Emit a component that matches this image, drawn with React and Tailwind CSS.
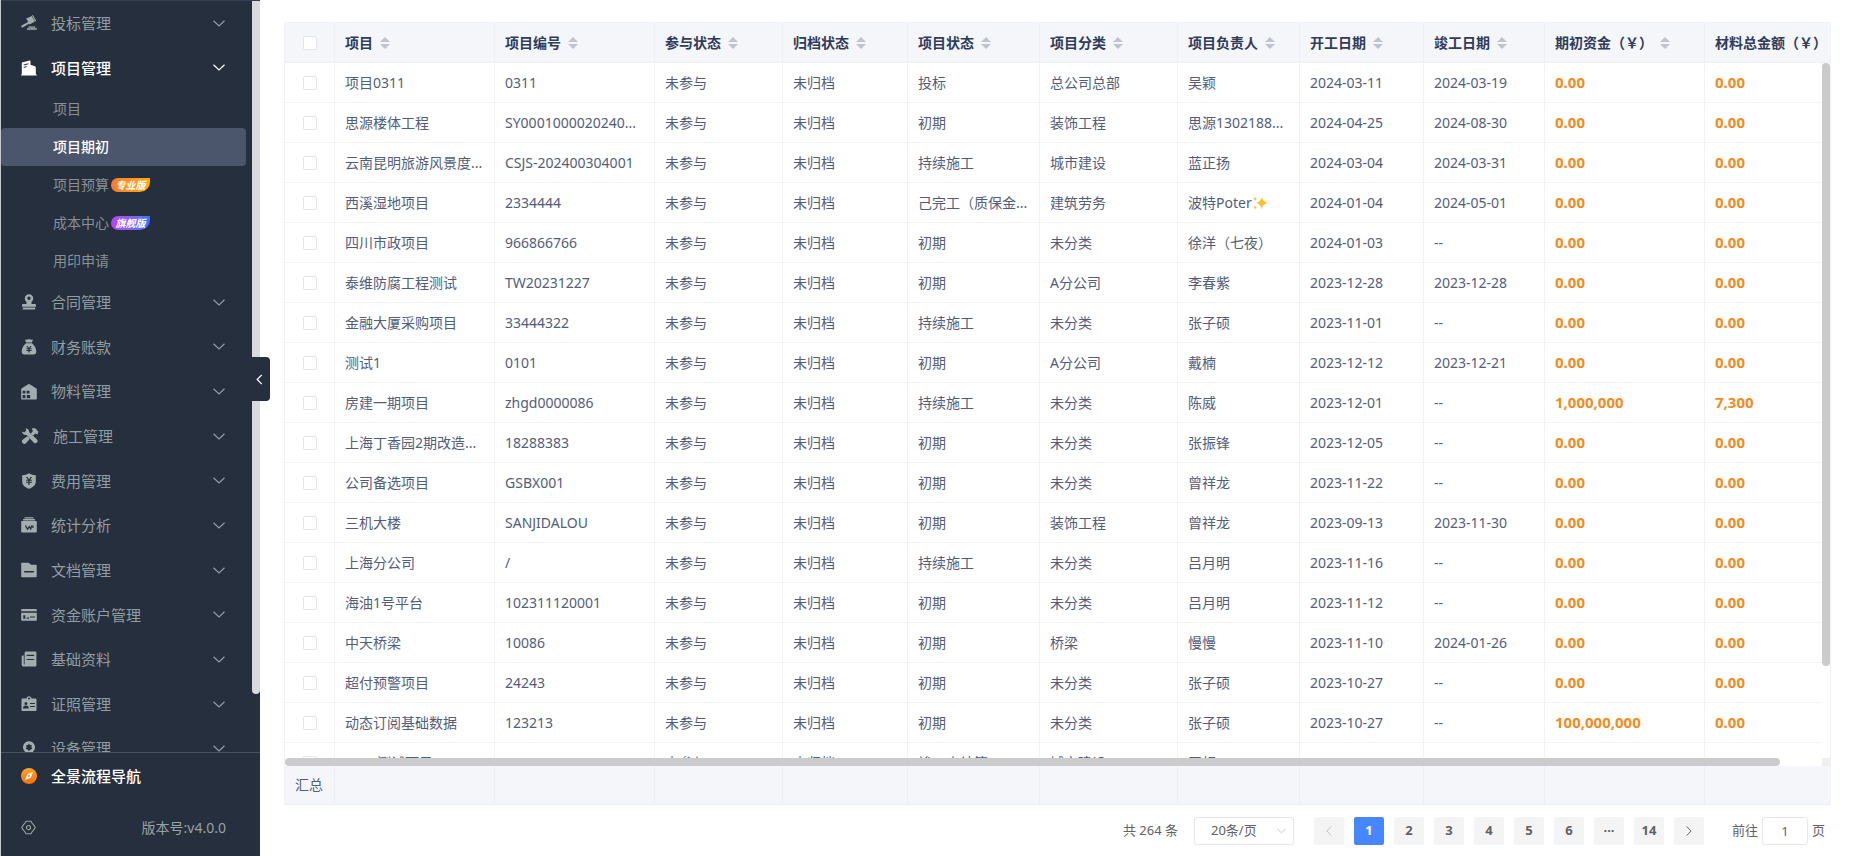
import React, { useState } from 'react';
import clsx from 'clsx';

const ICONS = {
  gavel: (
    <>
      <path d="M0.6 10.6 8 6.6l.9 1.6-7.3 4.2a1 1 0 0 1-1.3-.5z" />
      <path d="m6.2 3.2 4.4-2.3 3.3 5.6-4.4 2.4zM5.2 3.5l.9-.5 3.6 6-.9.6zM11 .6l.9-.5 3.3 5.7-.9.6z" />
      <path d="M7.4 11.4h6.8v1.3H7.4zM6 13.3h9.8v1.5H6z" />
    </>
  ),
  building: (
    <path
      fillRule="evenodd"
      d="M1 2.6 8.6.4c.5-.1.9.2.9.7v3.6l4.4 1.6c.6.2.9.6.9 1.1v7h1v1H.2v-1h.6V3c0-.2 0-.3.2-.4zm1.7 1.9v1l4.8-1.3v-1zm0 2.4v1l3-.8v-1z"
    />
  ),
  stamp: (
    <path
      fillRule="evenodd"
      d="M8 .2a4.2 4.2 0 0 1 4.2 4.2c0 1.500-.8 2.600-1.700 3.400v2.200h3.100c.8 0 1.400.5 1.400 1.300v1.400H1v-1.400C1 10.500 1.600 10 2.400 10h3.100V7.800C4.600 7 3.800 5.900 3.800 4.400A4.200 4.200 0 0 1 8 .2zm0 2.400a1.700 1.700 0 1 0 0 3.400 1.700 1.700 0 0 0 0-3.400zM1.800 13.600h12.400v1.800H1.800z"
    />
  ),
  bag: (
    <path
      fillRule="evenodd"
      d="M3.900.4c1.300.5 2 .2 2.700.1.9-.2 1.900-.2 2.800 0 .7.1 1.400.4 2.700-.1L10.800 3.400H5.200zM5 4.300h6c2.500 1.900 4.300 5.200 4.300 8.300 0 1.800-.9 2.900-2.700 2.900H3.400C1.600 15.500.7 14.400.7 12.600.7 9.500 2.500 6.200 5 4.300zm.3 2.600L7 9.300H5.400v.9h2v.8h-2v.9h2v1.600h1.200v-1.600h2V11h-2v-.8h2v-.9H9l1.700-2.400H9.400L8 9 6.600 6.900z"
    />
  ),
  warehouse: (
    <path
      fillRule="evenodd"
      d="M7.300.3a1.300 1.300 0 0 1 1.300 0l6.500 4c.4.2.7.6.7 1.100v9c0 .6-.4 1-1 1H1.200c-.6 0-1-.4-1-1V5.400c0-.5.2-.9.600-1.100zM1.600 6.800v2.800h2.800V6.800zm4 0v2.800h2.900V6.800zm-4 4.200v3.200h2.800V11zm4.200 0v3.200h3.400V11z"
    />
  ),
  tools: (
    <>
      <path
        d="M4.200 1c1.900.1 3.300 1.700 3.100 3.700l7 6.300a2.100 2.100 0 0 1-2.900 3l-6.400-7C3 7.300 1 6 .8 3.900l2.100 1 1.600-1.500z"
      />
      <path d="M9.600 1.200h3.100l2.800 3-.9 2.400-1.800-.8-2.100 2-2-2 1.800-2z" />
      <path d="m5.600 8.200 2.300 2.200-3.300 3.800a2.100 2.100 0 1 1-2.900-3z" />
    </>
  ),
  shield: (
    <path
      fillRule="evenodd"
      d="M8 .2c1.800 1.200 4.200 1.900 6.800 2v6.300c0 3.500-2.700 5.900-6.800 7.300C3.900 14.400 1.200 12 1.200 8.500V2.200C3.800 2.100 6.200 1.400 8 .2zM5 3.900l1.800 2.800H5.100v1h2.200v1H5.100v1h2.200v2h1.400v-2h2.200v-1H8.700v-1h2.200v-1H9.200L11 3.900H9.500L8 6.400 6.500 3.900z"
    />
  ),
  stats: (
    <>
      <path d="M3.500.2h9v1.200h-9zM2.100 2.100h11.800v1.300H2.100z" />
      <path d="M1.200 4.100h13.600c.6 0 1 .4 1 1v9.400c0 .6-.4 1-1 1H1.200c-.6 0-1-.4-1-1V5.100c0-.6.4-1 1-1z" />
      <path d="m4.400 8.600 2.200 3.600 1.600-2.800 1.500 2.600 1.200-3.600M11.900 8.600v2.400" fill="none" stroke="#262f3d" strokeWidth="1.200" />
    </>
  ),
  folder: (
    <path
      fillRule="evenodd"
      d="M1.200.7h6.500L10 2.800h4.700c.6 0 1 .4 1 1v10.500c0 .6-.4 1-1 1H1.200c-.6 0-1-.4-1-1V1.700c0-.6.4-1 1-1zM3.200 9v1.400h9.600V9z"
    />
  ),
  card: (
    <path
      fillRule="evenodd"
      d="M1 2h14c.5 0 .8.300.8.800v1.400H.2V2.800C.2 2.300.5 2 1 2zM.2 5.700h15.600v7.100c0 .6-.3.900-.8.900H1c-.5 0-.8-.3-.8-.9zM2.300 8.200v3.600h2V8.200zm3.300 2.400v1.200H8v-1.200zm3.300-1.200v1h5v-1z"
    />
  ),
  book: (
    <path
      fillRule="evenodd"
      d="M5.100.6h9.300c.6 0 1 .4 1 1v12.800c0 .7-.5 1.200-1.200 1.200H2.600C1.400 15.600.7 14.800.7 13.700V5.500c0-.5.4-.9.900-.9h1.200v8.900h.8V2.100c0-.8.6-1.500 1.500-1.500zm.6 3.200v1.100h7.500V3.800zm0 4.200v1.100h7.500V8z"
    />
  ),
  badge: (
    <path
      fillRule="evenodd"
      d="M8 .2c1.500 0 2.400.9 2.500 2.400h4.200c.5 0 .8.300.8.800v10.900c0 .5-.3.800-.8.800H1.300c-.5 0-.8-.3-.8-.8V3.400c0-.5.3-.8.800-.8h4.200C5.600 1.100 6.500.2 8 .2zM8 1.600a1 1 0 1 0 0 2 1 1 0 0 0 0-2zM4.900 5.900a1.500 1.500 0 1 0 0 3 1.500 1.500 0 0 0 0-3zM2 12.500h5.800c0-1.700-1-2.900-2.900-2.900S2 10.800 2 12.500zM9 6.900V8h4.900V6.900zm0 3V11h4.900V9.900z"
    />
  ),
  device: (
    <path
      fillRule="evenodd"
      d="M8 .2a6 6 0 0 1 4 10.400l2.800 4.900H1.200L4 10.600A6 6 0 0 1 8 .2zm0 2.400-1 1.500-1.900.2.5 1.900-.9 1.700 1.800.5L8 9.900l1.500-1.500 1.800-.5-.9-1.700.5-1.900L9 4.100z"
    />
  ),
};

const MENU_TOP = [
  { label: '投标管理', icon: 'gavel' },
  { label: '项目管理', icon: 'building', open: true },
];

const SUB_MENU = [
  { label: '项目' },
  { label: '项目期初' },
  { label: '项目预算', tag: '专业版', tagClass: 'bg-linear-to-r from-[#fb7a2b] to-[#ffae00]' },
  { label: '成本中心', tag: '旗舰版', tagClass: 'bg-linear-to-r from-[#bb3df5] to-[#2f74ff]' },
  { label: '用印申请' },
];

const MENU_REST = [
  { label: '合同管理', icon: 'stamp' },
  { label: '财务账款', icon: 'bag' },
  { label: '物料管理', icon: 'warehouse' },
  { label: '施工管理', icon: 'tools', wide: true },
  { label: '费用管理', icon: 'shield' },
  { label: '统计分析', icon: 'stats' },
  { label: '文档管理', icon: 'folder' },
  { label: '资金账户管理', icon: 'card' },
  { label: '基础资料', icon: 'book' },
  { label: '证照管理', icon: 'badge' },
  { label: '设备管理', icon: 'device' },
];

const COLUMNS = [
  { title: '项目', width: 'w-[160px]' },
  { title: '项目编号', width: 'w-[160px]' },
  { title: '参与状态', width: 'w-[128px]' },
  { title: '归档状态', width: 'w-[125px]' },
  { title: '项目状态', width: 'w-[132px]' },
  { title: '项目分类', width: 'w-[138px]' },
  { title: '项目负责人', width: 'w-[122px]' },
  { title: '开工日期', width: 'w-[124px]' },
  { title: '竣工日期', width: 'w-[121px]' },
  { title: '期初资金（￥）', width: 'w-[160px]' },
  { title: '材料总金额（￥）', width: '' },
];

// name, code, status, category, owner, start, end, initial fund, material total
const ROWS = [
  ['项目0311', '0311', '投标', '总公司总部', '吴颖', '2024-03-11', '2024-03-19', '0.00', '0.00'],
  ['思源楼体工程', 'SY0001000020240...', '初期', '装饰工程', '思源1302188...', '2024-04-25', '2024-08-30', '0.00', '0.00'],
  ['云南昆明旅游风景度...', 'CSJS-202400304001', '持续施工', '城市建设', '蓝正扬', '2024-03-04', '2024-03-31', '0.00', '0.00'],
  ['西溪湿地项目', '2334444', '己完工（质保金...', '建筑劳务', '波特Poter', '2024-01-04', '2024-05-01', '0.00', '0.00'],
  ['四川市政项目', '966866766', '初期', '未分类', '徐洋（七夜）', '2024-01-03', '--', '0.00', '0.00'],
  ['泰维防腐工程测试', 'TW20231227', '初期', 'A分公司', '李春紫', '2023-12-28', '2023-12-28', '0.00', '0.00'],
  ['金融大厦采购项目', '33444322', '持续施工', '未分类', '张子硕', '2023-11-01', '--', '0.00', '0.00'],
  ['测试1', '0101', '初期', 'A分公司', '戴楠', '2023-12-12', '2023-12-21', '0.00', '0.00'],
  ['房建一期项目', 'zhgd0000086', '持续施工', '未分类', '陈威', '2023-12-01', '--', '1,000,000', '7,300'],
  ['上海丁香园2期改造...', '18288383', '初期', '未分类', '张振锋', '2023-12-05', '--', '0.00', '0.00'],
  ['公司备选项目', 'GSBX001', '初期', '未分类', '曾祥龙', '2023-11-22', '--', '0.00', '0.00'],
  ['三机大楼', 'SANJIDALOU', '初期', '装饰工程', '曾祥龙', '2023-09-13', '2023-11-30', '0.00', '0.00'],
  ['上海分公司', '/', '持续施工', '未分类', '吕月明', '2023-11-16', '--', '0.00', '0.00'],
  ['海油1号平台', '102311120001', '初期', '未分类', '吕月明', '2023-11-12', '--', '0.00', '0.00'],
  ['中天桥梁', '10086', '初期', '桥梁', '慢慢', '2023-11-10', '2024-01-26', '0.00', '0.00'],
  ['超付预警项目', '24243', '初期', '未分类', '张子硕', '2023-10-27', '--', '0.00', '0.00'],
  ['动态订阅基础数据', '123213', '初期', '未分类', '张子硕', '2023-10-27', '--', '100,000,000', '0.00'],
  ['1211测试项目', '1211', '竣工未结算', '城市建设', '王相', '2023-10-11', '2023-11-17', '0.00', '0.00'],
];

function Chevron({ className }) {
  return (
    <svg viewBox="0 0 12 7" className={className} fill="none" stroke="currentColor" strokeWidth="1.2">
      <path d="m.5.7 5.500 5.300L11.500.7" />
    </svg>
  );
}

function Sparkles() {
  return (
    <svg viewBox="0 0 16 16" className="inline-block w-4 h-4 align-[-3px]" fill="#fcc02e" aria-label="✨">
      <path d="M9.800 1.700c.9 3.300 2 4.800 5.900 6.100-3.900 1.400-5 2.800-5.900 6.400-.9-3.600-2-5-5.700-6.400 3.700-1.300 4.800-2.800 5.700-6.100z" />
      <path d="M3.200 1.600c.3 1.400.7 1.900 2.100 2.300-1.400.4-1.800.9-2.100 2.300C2.900 4.800 2.500 4.300 1.100 3.900c1.400-.4 1.800-.9 2.100-2.300zM3 10.200c.3 1.400.7 1.900 2 2.300-1.300.4-1.700.9-2 2.300-.3-1.400-.7-1.900-2-2.300 1.300-.4 1.700-.9 2-2.300z" />
    </svg>
  );
}

function MenuItem({ item }) {
  return (
    <button
      className={clsx(
        'flex items-center w-full pl-5 pr-7 gap-[14px] text-[15px] text-left',
        item.open ? 'text-white font-medium' : 'text-[#939da1]'
      )}
    >
      <svg
        viewBox="0 0 16 16"
        className={clsx('shrink-0', item.wide ? 'w-[18px] h-[18px]' : 'w-4 h-4')}
        fill={item.open ? '#fff' : '#a3adb0'}
      >
        {ICONS[item.icon]}
      </svg>
      <span className="flex-1">{item.label}</span>
      <Chevron className="w-3 h-[7px]" />
    </button>
  );
}

function Sidebar() {
  const [active, setActive] = useState('项目期初');

  return (
    <aside className="relative w-[260px] shrink-0 h-full flex flex-col bg-[#262f3d] border-l border-[#c4c8cc]">
      <nav className="relative flex-1 min-h-0 overflow-hidden border-t border-[#344052]">
        <div className="w-[252px]">
          <div className="grid auto-rows-fr h-[89px]">
            {MENU_TOP.map((item) => <MenuItem key={item.label} item={item} />)}
          </div>
          {SUB_MENU.map((sub) => (
            <button
              key={sub.label}
              onClick={() => setActive(sub.label)}
              className={clsx(
                'flex items-center h-[38px] w-[245px] pl-[52px] gap-[2px] rounded text-sm',
                active === sub.label ? 'bg-[#4b556b] text-white font-medium' : 'text-[#879195]'
              )}
            >
              {sub.label}
              {sub.tag && (
                <span
                  className={clsx(
                    'h-[14px] w-[39px] leading-[14px] text-center text-[10px] font-bold italic text-white rounded-l-[7px] rounded-br-[10px]',
                    sub.tagClass
                  )}
                >
                  {sub.tag}
                </span>
              )}
            </button>
          ))}
          <div className="grid auto-rows-fr h-[491px]">
            {MENU_REST.map((item) => <MenuItem key={item.label} item={item} />)}
          </div>
        </div>
        {/* scrollbar thumb */}
        <div className="absolute right-0 top-0 w-2 h-[693px] bg-[#d8dadd] rounded-b" />
      </nav>

      <div className="h-[104px] border-t border-[#485162]">
        <button className="flex items-center h-[46px] pl-5 gap-[14px] text-[15px] font-medium text-white">
          <svg viewBox="0 0 16 16" className="w-4 h-4">
            <defs>
              <linearGradient id="nav" x1="0" y1="0" x2="0" y2="1">
                <stop offset="0" stopColor="#ffa32b" />
                <stop offset="1" stopColor="#fb6f0a" />
              </linearGradient>
            </defs>
            <circle cx="8" cy="8" r="8" fill="url(#nav)" />
            <path d="m12 4-2.300 5.700L4 12l2.300-5.700z" fill="#fff" />
            <circle cx="8" cy="8" r="1.100" fill="#fb8a1a" />
          </svg>
          全景流程导航
        </button>
        <div className="flex items-center justify-between h-[57px] pl-5 pr-[34px] text-sm text-[#98a2a5]">
          <svg viewBox="0 0 16 16" className="w-[15px] h-[15px]" fill="none" stroke="currentColor" strokeWidth="1.200">
            <path d="M5.300 1.300h5.400l1 1.900 1.900 2.300L15.200 8l-1.600 2.500-1.900 2.300-1 1.900H5.300l-1-1.900-1.900-2.300L.8 8l1.600-2.500 1.900-2.300z" strokeLinejoin="round" />
            <circle cx="8" cy="8" r="2.200" />
          </svg>
          <span>版本号:v4.0.0</span>
        </div>
      </div>

      <button
        aria-label="收起"
        className="absolute z-10 top-[357px] left-[251px] w-[18px] h-11 flex items-center pl-1 bg-[#262f3d] rounded-r text-white"
      >
        <svg viewBox="0 0 7 12" className="w-[7px] h-[11px]" fill="none" stroke="currentColor" strokeWidth="1.400">
          <path d="M6 1 1 6l5 5" />
        </svg>
      </button>
    </aside>
  );
}

function SortCaret() {
  return (
    <svg viewBox="0 0 10 12" className="w-[10px] h-3 shrink-0" fill="#c0c4cc">
      <path d="M5 0l5 5H0zM5 12l5-5H0z" />
    </svg>
  );
}

function Checkbox({ label }) {
  return (
    <input
      type="checkbox"
      aria-label={label}
      className="block mx-auto appearance-none w-[14px] h-[14px] bg-white border border-[#e2e5ec] rounded-[2px] checked:bg-[#4886ff]"
    />
  );
}

const td = 'border-r border-b border-[#f1f3f9] px-[10px] whitespace-nowrap';
const money = 'text-[15px] font-bold text-[#f58a23]';

function ProjectTable() {
  return (
    <div className="relative flex-1 min-h-0 border-t border-x border-[#f0f2f7]">
      <div className="h-full overflow-hidden">
        <table className="table-fixed w-full min-w-[1580px] border-separate border-spacing-0 text-sm text-[#525d7b]">
          <thead>
            <tr className="h-10">
              <th className="sticky top-0 z-10 w-[50px] bg-[#f5f6fa] border-r border-b border-[#edf0f6]">
                <Checkbox label="全选" />
              </th>
              {COLUMNS.map((col) => (
                <th
                  key={col.title}
                  className={clsx('sticky top-0 z-10 bg-[#f5f6fa] border-r border-b border-[#edf0f6] px-[10px] text-left font-bold text-[#2f3c5b]', col.width)}
                >
                  <div className="flex items-center gap-[7px] whitespace-nowrap">
                    {col.title}
                    <SortCaret />
                  </div>
                </th>
              ))}
            </tr>
          </thead>
          <tbody>
            {ROWS.map(([name, code, status, category, owner, start, end, fund, material]) => (
              <tr key={name} className="h-10">
                <td className="border-r border-b border-[#f1f3f9]"><Checkbox label={name} /></td>
                <td className={td}>{name}</td>
                <td className={td}>{code}</td>
                <td className={td}>未参与</td>
                <td className={td}>未归档</td>
                <td className={td}>{status}</td>
                <td className={td}>{category}</td>
                <td className={td}>
                  {owner}
                  {owner === '波特Poter' && <Sparkles />}
                </td>
                <td className={td}>{start}</td>
                <td className={td}>{end}</td>
                <td className={clsx(td, money)}>{fund}</td>
                <td className={clsx(td, money)}>{material}</td>
              </tr>
            ))}
          </tbody>
          <tfoot>
            <tr className="h-[39px]">
              <td className="sticky bottom-0 bg-[#f5f6fa] border-r border-b border-[#ebeef5] pl-[10px] whitespace-nowrap">汇总</td>
              {COLUMNS.map((col) => (
                <td key={col.title} className="sticky bottom-0 bg-[#f5f6fa] border-r border-b border-[#ebeef5]" />
              ))}
            </tr>
          </tfoot>
        </table>
      </div>

      {/* scrollbars */}
      <div className="absolute right-0 top-10 bottom-[39px] w-2 pb-[100px] bg-white">
        <div className="w-2 h-full rounded-full bg-[#cbcbcb]" />
      </div>
      <div className="absolute left-0 right-0 bottom-[39px] h-2 pr-[50px]">
        <div className="h-2 rounded-full bg-[#cbcbcb]" />
      </div>
      <div className="absolute right-0 bottom-[39px] w-2 h-2 bg-[#efefef]" />
    </div>
  );
}

const pageBtn = 'w-[30px] h-7 flex items-center justify-center rounded-[2px] font-bold';

function Pagination() {
  const [page, setPage] = useState(1);

  return (
    <div className="flex items-center justify-end h-7 mt-3 mb-[11px] pr-[6px] text-[13px] text-[#606266]">
      <span className="mr-4">共 264 条</span>
      <div className="relative mr-5">
        <select aria-label="每页条数" className="appearance-none w-[100px] h-7 pl-4 border border-[#e4e7ed] rounded-[3px] bg-white">
          <option>20条/页</option>
          <option>50条/页</option>
        </select>
        <Chevron className="absolute right-2 top-[11px] w-[9px] h-[6px] text-[#c0c4cc] pointer-events-none" />
      </div>
      <div className="flex gap-[10px]">
        <button aria-label="上一页" className={clsx(pageBtn, 'bg-[#f4f4f5] text-[#c0c4cc]')}>
          <Chevron className="w-[10px] h-[6px] rotate-90" />
        </button>
        {[1, 2, 3, 4, 5, 6, '···', 14].map((n) => (
          <button
            key={n}
            onClick={() => n !== '···' && setPage(n)}
            className={clsx(pageBtn, n === page ? 'bg-[#4886ff] text-white' : 'bg-[#f4f4f5]')}
          >
            {n}
          </button>
        ))}
        <button aria-label="下一页" className={clsx(pageBtn, 'bg-[#f4f4f5]')}>
          <Chevron className="w-[10px] h-[6px] -rotate-90" />
        </button>
      </div>
      <label className="flex items-center gap-1 ml-7">
        前往
        <input defaultValue="1" className="w-[46px] h-7 text-center border border-[#e4e7ed] rounded-[3px]" />
        页
      </label>
    </div>
  );
}

export default function App() {
  return (
    <div className="flex h-screen overflow-hidden bg-white font-['Noto_Sans','Noto_Sans_CJK_SC',sans-serif]">
      <Sidebar />
      <main className="flex-1 min-w-0 flex flex-col pl-6 pr-[23px] pt-[22px]">
        <ProjectTable />
        <Pagination />
      </main>
    </div>
  );
}
